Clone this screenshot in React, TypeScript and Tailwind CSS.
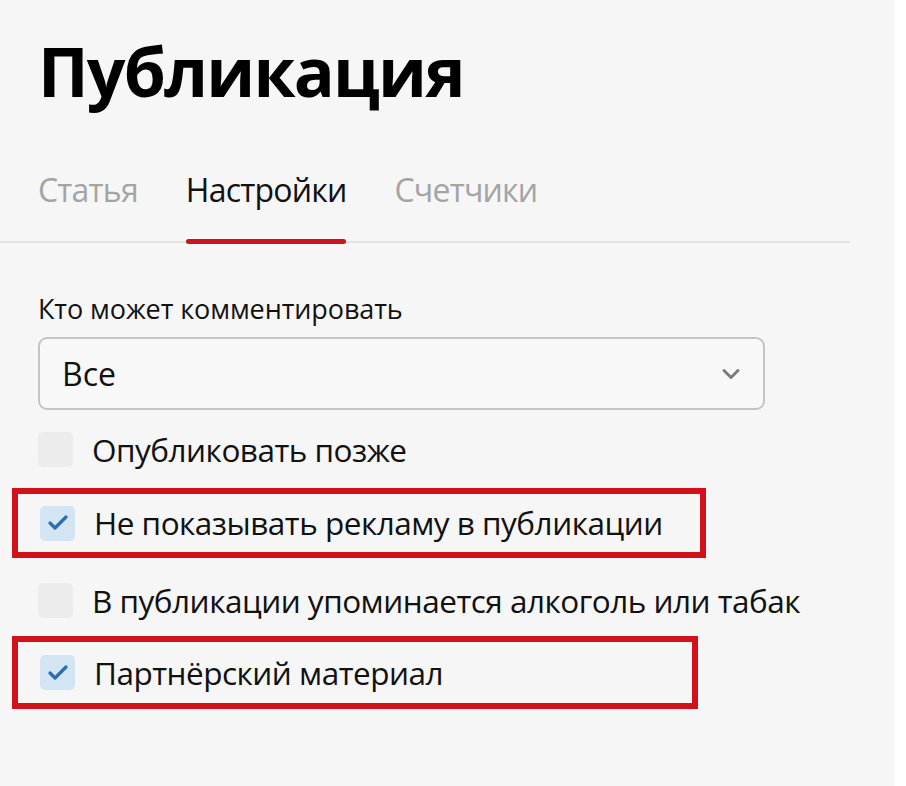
import { Check, ChevronDown } from 'lucide-react';

const font = { fontFamily: '"Open Sans", "DejaVu Sans", sans-serif' };

function Box({ checked }: { checked?: boolean }) {
  return (
    <div
      className={`w-[35px] h-[35px] rounded-[5px] flex items-center justify-center shrink-0 ${
        checked ? 'bg-[#d3e4f3]' : 'bg-[#ececec]'
      }`}
    >
      {checked && <Check className="w-[24px] h-[24px] text-[#2f6db2]" strokeWidth={3.2} />}
    </div>
  );
}

function Row({ label, checked }: { label: string; checked?: boolean }) {
  return (
    <div className="flex items-center gap-[19px]">
      <Box checked={checked} />
      <span className="text-[31.5px] text-[#111] tracking-[-0.5px] leading-none">{label}</span>
    </div>
  );
}

export default function App() {
  return (
    <div className="w-[906px] h-[786px] bg-[#f6f6f6] flex" style={font}>
      <div className="w-[895px] pt-[37px]">
        {/* Title */}
        <h1 className="pl-[38px] text-[68px] font-bold text-black leading-none tracking-[-1.8px]">Публикация</h1>

        {/* Tabs */}
        <div className="mt-[61px] w-[850px] border-b-2 border-[#e2e2e2] pl-[38px] flex gap-[48px]">
          <div className="text-[32px] text-[#a4a4a4] pb-[27px] tracking-[-0.8px]">Статья</div>
          <div className="relative text-[32px] text-[#111] pb-[27px] tracking-[-0.8px]">
            Настройки
            <div className="absolute left-0 right-0 -bottom-[3px] h-[5px] rounded-full bg-[#c8151e]" />
          </div>
          <div className="text-[32px] text-[#a4a4a4] pb-[27px] tracking-[-0.8px]">Счетчики</div>
        </div>

        {/* Comments */}
        <div className="pl-[38px] mt-[52px]">
          <div className="text-[27px] font-medium text-[#111] tracking-[-0.1px] leading-none">Кто может комментировать</div>
          <div className="mt-[15px] w-[727px] h-[73px] border-2 border-[#c4c4c4] rounded-[9px] flex items-center justify-between pl-[22px] pr-[18px] bg-[#f8f8f8]">
            <span className="text-[32px] text-[#111] leading-none">Все</span>
            <ChevronDown className="w-7 h-7 text-[#7a7a7a]" strokeWidth={2.5} />
          </div>
        </div>

        {/* Checkboxes */}
        <div className="mt-[22px] flex flex-col">
          <div className="pl-[38px]">
            <Row label="Опубликовать позже" />
          </div>
          <div className="mt-[21px] ml-[12px] w-[694px] h-[70px] border-[6px] border-[#d2111c] pl-[22px] flex items-center">
            <Row label="Не показывать рекламу в публикации" checked />
          </div>
          <div className="pl-[38px] mt-[25px]">
            <Row label="В публикации упоминается алкоголь или табак" />
          </div>
          <div className="mt-[18px] ml-[12px] w-[686px] h-[73px] border-[6px] border-[#d2111c] pl-[22px] flex items-center">
            <Row label="Партнёрский материал" checked />
          </div>
        </div>
      </div>
      <div className="flex-1 bg-white" />
    </div>
  );
}
